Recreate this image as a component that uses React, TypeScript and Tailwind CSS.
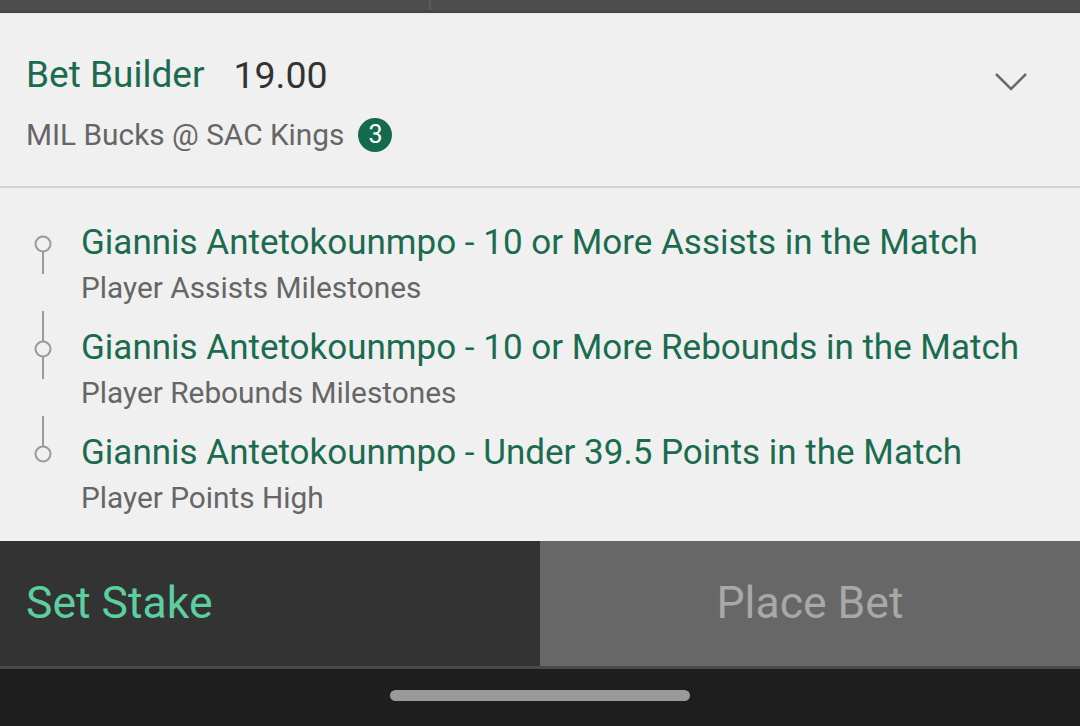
import React from 'react';

interface Leg {
  title: string;
  market: string;
}

const legs: Leg[] = [
  { title: 'Giannis Antetokounmpo - 10 or More Assists in the Match', market: 'Player Assists Milestones' },
  { title: 'Giannis Antetokounmpo - 10 or More Rebounds in the Match', market: 'Player Rebounds Milestones' },
  { title: 'Giannis Antetokounmpo - Under 39.5 Points in the Match', market: 'Player Points High' },
];

function TimelineNode({ first, last }: { first: boolean; last: boolean }) {
  return (
    <svg width="34" height="60" viewBox="0 0 34 60" className="overflow-visible shrink-0">
      {!first && <line x1="17" y1="-17" x2="17" y2="13" stroke="#9a9a9a" strokeWidth="2" />}
      <circle cx="17" cy="21" r="7.5" fill="none" stroke="#9a9a9a" strokeWidth="2" />
      {!last && <line x1="17" y1="29" x2="17" y2="51" stroke="#9a9a9a" strokeWidth="2" />}
    </svg>
  );
}

export default function App() {
  return (
    <div
      className="w-[1080px] h-[726px] flex flex-col bg-[#f0f0f0] overflow-hidden"
      style={{ fontFamily: 'Roboto, "Liberation Sans", sans-serif' }}
    >
      {/* top strip of the previous card */}
      <div className="h-[14px] flex flex-col shrink-0">
        <div className="h-[10px] flex bg-[#4e4e4e]">
          <div className="w-[429px] h-full" />
          <div className="w-[2px] h-full bg-[#5c5c5c]" />
        </div>
        <div className="h-[3px] bg-[#454545]" />
        <div className="h-[1px] bg-[#e6e6e6]" />
      </div>

      {/* header */}
      <div className="flex justify-between pl-[26px] pr-[52px] pt-[41px] pb-[33px] border-b-2 border-[#d2d2d2] shrink-0">
        <div className="flex flex-col">
          <div className="flex items-center h-[40px]">
            <span className="text-[37px] text-[#1b6b4e]">Bet Builder</span>
            <span className="text-[37.5px] text-[#333333] ml-[29px]">19.00</span>
          </div>
          <div className="flex items-center h-[36px] mt-[22px]">
            <span className="text-[29.8px] text-[#666666]">MIL Bucks @ SAC Kings</span>
            <span className="ml-[14px] w-[34px] h-[34px] rounded-full bg-[#146a4e] text-white text-[25px] flex items-center justify-center">
              3
            </span>
          </div>
        </div>
        <svg width="34" height="20" viewBox="0 0 34 20" className="mt-[16px]">
          <polyline points="2,3 17,18 32,3" fill="none" stroke="#6a6a6a" strokeWidth="2.5" />
        </svg>
      </div>

      {/* legs */}
      <div className="flex flex-col pt-[35px] flex-1">
        {legs.map((leg, i) => (
          <div key={i} className="flex h-[105px] pl-[26px]">
            <TimelineNode first={i === 0} last={i === legs.length - 1} />
            <div className="flex flex-col ml-[21px]">
              <div className="h-[40px] leading-[40px] text-[35px] text-[#1b6b4e] whitespace-nowrap">{leg.title}</div>
              <div className="h-[34px] leading-[34px] mt-[8px] text-[29.8px] text-[#666666] whitespace-nowrap">{leg.market}</div>
            </div>
          </div>
        ))}
      </div>

      {/* actions */}
      <div className="flex h-[125px] shrink-0">
        <button className="w-[540px] h-full bg-[#333333] flex items-center pl-[26px] text-[44.5px] text-[#5ccfa0]">
          Set Stake
        </button>
        <button className="flex-1 h-full bg-[#676767] flex items-center justify-center text-[44.5px] text-[#a8a8a8]">
          Place Bet
        </button>
      </div>
      <div className="h-[3px] bg-[#4a4a4a] shrink-0" />

      {/* system nav bar */}
      <div className="h-[57px] bg-[#1e1e1e] flex justify-center pt-[21px] shrink-0">
        <div className="w-[300px] h-[11px] rounded-full bg-[#9a9a9a]" />
      </div>
    </div>
  );
}
